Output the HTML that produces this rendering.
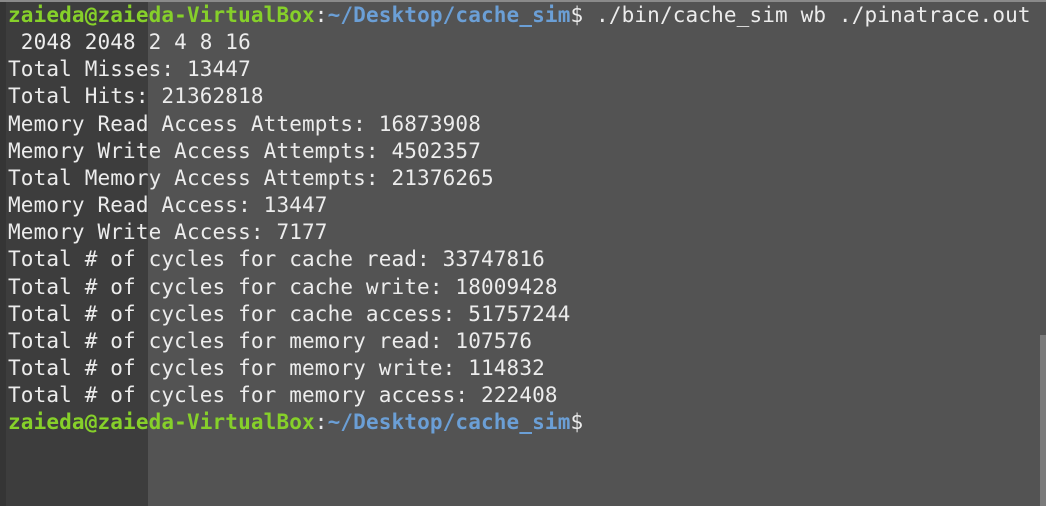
<!DOCTYPE html>
<html><head><style>
html,body{margin:0;padding:0;}
body{width:1046px;height:506px;overflow:hidden;background:#535353;position:relative;}
.left{position:absolute;left:0;top:0;width:148px;height:506px;background:#3d3d3d;}
.edge{position:absolute;left:0;top:0;width:6px;height:506px;background:#353535;}
.top{position:absolute;left:0;top:0;width:1046px;height:2px;background:#8a8a8a;}
.sb{position:absolute;left:1040px;top:335px;width:6px;height:171px;background:#7a7a7a;}
pre{position:absolute;left:8px;top:2px;margin:0;font-family:"DejaVu Sans Mono","Liberation Mono",monospace;font-size:21px;line-height:27.15px;color:#ececec;letter-spacing:0.14px;}
.g{color:#86d02a;font-weight:bold;}
.b{color:#6b9fd6;font-weight:bold;}
</style></head><body>
<div class="left"></div><div class="edge"></div><div class="top"></div><div class="sb"></div>
<pre><span class="g">zaieda@zaieda-VirtualBox</span>:<span class="b">~/Desktop/cache_sim</span>$ ./bin/cache_sim wb ./pinatrace.out
 2048 2048 2 4 8 16
Total Misses: 13447
Total Hits: 21362818
Memory Read Access Attempts: 16873908
Memory Write Access Attempts: 4502357
Total Memory Access Attempts: 21376265
Memory Read Access: 13447
Memory Write Access: 7177
Total # of cycles for cache read: 33747816
Total # of cycles for cache write: 18009428
Total # of cycles for cache access: 51757244
Total # of cycles for memory read: 107576
Total # of cycles for memory write: 114832
Total # of cycles for memory access: 222408
<span class="g">zaieda@zaieda-VirtualBox</span>:<span class="b">~/Desktop/cache_sim</span>$</pre>
</body></html>
